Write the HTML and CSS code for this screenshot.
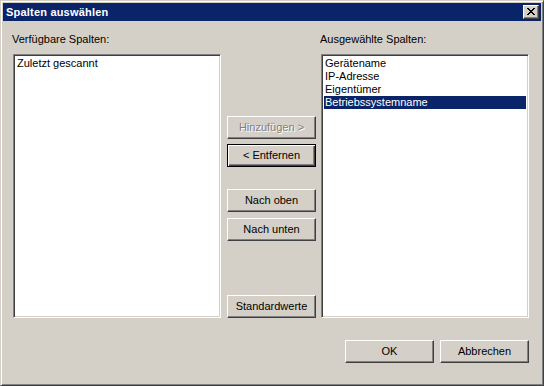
FILE: index.html
```html
<!DOCTYPE html>
<html lang="de">
<head>
<meta charset="utf-8">
<title>Spalten auswählen</title>
<link rel="stylesheet" href="styles.css">
</head>
<body>
<div class="window">
  <div class="titlebar">
    <span class="title">Spalten auswählen</span>
    <span class="close"><svg width="8" height="7" viewBox="0 0 8 7"><path d="M0 0h2v1h1v1h2v-1h1v-1h2v1h-1v1h-1v1h-1v1h1v1h1v1h1v1h-2v-1h-1v-1h-2v1h-1v1h-2v-1h1v-1h1v-1h1v-1h-1v-1h-1v-1h-1z" fill="#000"/></svg></span>
  </div>
  <div class="content">
    <div class="col">
      <div class="label">Verfügbare Spalten:</div>
      <div class="list">
        <div class="item">Zuletzt gescannt</div>
      </div>
    </div>
    <div class="mid">
      <button class="btn disabled">Hinzufügen &gt;</button>
      <button class="btn default">&lt; Entfernen</button>
      <button class="btn up">Nach oben</button>
      <button class="btn down">Nach unten</button>
      <button class="btn std">Standardwerte</button>
    </div>
    <div class="col">
      <div class="label">Ausgewählte Spalten:</div>
      <div class="list">
        <div class="item">Gerätename</div>
        <div class="item">IP-Adresse</div>
        <div class="item">Eigentümer</div>
        <div class="item selected">Betriebssystemname</div>
      </div>
    </div>
  </div>
  <div class="footer">
    <button class="btn">OK</button>
    <button class="btn">Abbrechen</button>
  </div>
</div>
</body>
</html>
```

FILE: styles.css
```css
html, body {
  margin: 0;
  padding: 0;
  background: #d4d0c8;
}
body {
  font-family: "Liberation Sans", Arial, sans-serif;
  font-size: 11px;
  color: #000;
}
.window {
  width: 544px;
  height: 386px;
  box-sizing: border-box;
  background: #d4d0c8;
  border-style: solid;
  border-width: 1px;
  border-color: #d4d0c8 #404040 #404040 #d4d0c8;
  box-shadow: inset 1px 1px 0 #ffffff, inset -1px -1px 0 #808080;
  padding: 2px;
  display: flex;
  flex-direction: column;
}
.titlebar {
  height: 18px;
  background: #0a246a;
  color: #fff;
  display: flex;
  align-items: center;
  justify-content: space-between;
  padding: 0 2px 0 3px;
}
.title {
  font-weight: bold;
  font-size: 11px;
  line-height: 13px;
  letter-spacing: 0.2px;
}
.close {
  width: 16px;
  height: 14px;
  box-sizing: border-box;
  background: #d4d0c8;
  border-style: solid;
  border-width: 1px;
  border-color: #ffffff #404040 #404040 #ffffff;
  box-shadow: inset -1px -1px 0 #808080;
  display: flex;
  align-items: center;
  justify-content: center;
  padding: 0 1px 1px 0;
}
.close svg { display: block; }
.content {
  display: flex;
  padding: 12px 0 0 10px;
}
.col {
  display: flex;
  flex-direction: column;
  width: 208px;
}
.label {
  height: 13px;
  line-height: 13px;
  margin: 0 0 8px -1px;
}
.list {
  height: 264px;
  box-sizing: border-box;
  background: #fff;
  border-style: solid;
  border-width: 1px;
  border-color: #808080 #ffffff #ffffff #808080;
  box-shadow: inset 1px 1px 0 #404040, inset -1px -1px 0 #d4d0c8;
  padding: 2px;
}
.item {
  height: 13px;
  line-height: 13px;
  padding-left: 1px;
  white-space: nowrap;
}
.item.selected {
  background: #0a246a;
  color: #fff;
}
.mid {
  width: 89px;
  margin: 0 5px 0 6px;
  padding-top: 83px;
  display: flex;
  flex-direction: column;
}
.btn {
  width: 89px;
  height: 23px;
  box-sizing: border-box;
  font-family: "Liberation Sans", Arial, sans-serif;
  font-size: 11px;
  color: #000;
  background: #d4d0c8;
  border-style: solid;
  border-width: 1px;
  border-color: #ffffff #404040 #404040 #ffffff;
  box-shadow: inset -1px -1px 0 #808080;
  padding: 0 0 1px 0;
  margin: 0;
  line-height: 13px;
  text-align: center;
}
.btn.disabled {
  color: #808080;
  text-shadow: 1px 1px 0 #ffffff;
}
.btn.default {
  margin-top: 5px;
  border-color: #000;
  box-shadow: inset 1px 1px 0 #ffffff, inset -1px -1px 0 #404040, inset -2px -2px 0 #808080;
}
.btn.up { margin-top: 22px; }
.btn.down { margin-top: 6px; }
.btn.std { margin-top: auto; }
.footer {
  display: flex;
  justify-content: flex-end;
  gap: 6px;
  margin-top: 22px;
  padding-right: 12px;
}
```
